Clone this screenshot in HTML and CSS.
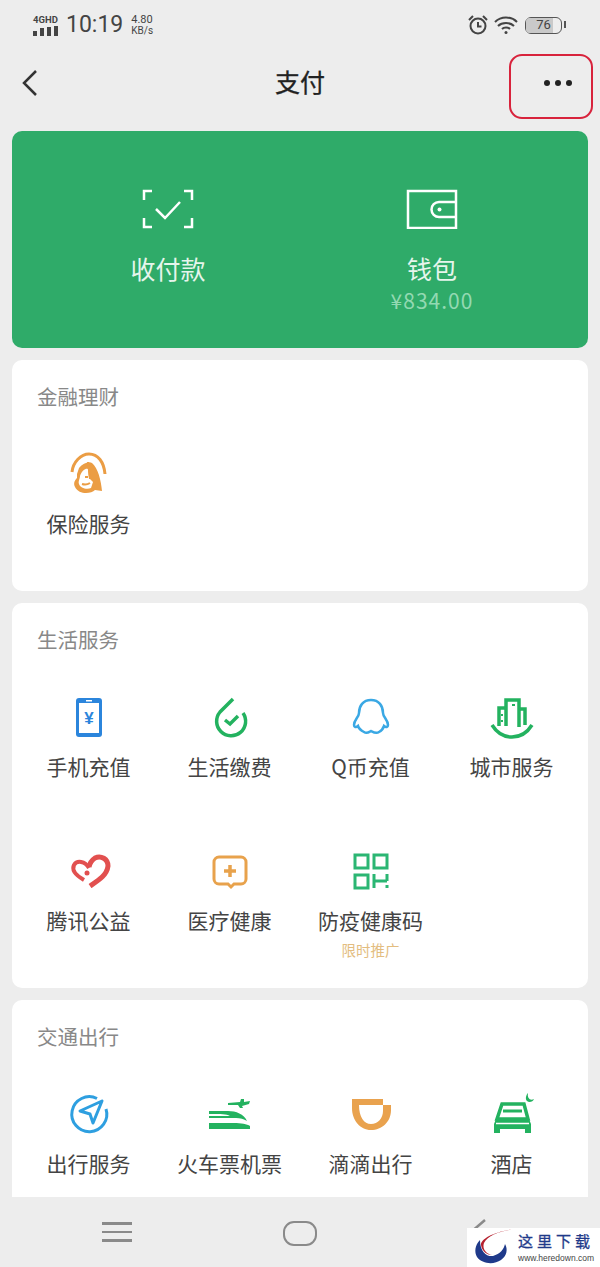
FILE: index.html
```html
<!DOCTYPE html>
<html lang="zh-CN">
<head>
  <meta charset="UTF-8" />
  <title>支付</title>
  <link rel="stylesheet" href="styles.css">
</head>
<body>
  <div class="screen">
    <div class="status-bar">
      <div class="status-left">
        <div class="net">
          <span class="net-label">4GHD</span>
          <svg width="25" height="10" viewBox="0 0 25 10"><g fill="#444"><rect x="0" y="5" width="4" height="5"/><rect x="7" y="2" width="4" height="8"/><rect x="14" y="1" width="4" height="9"/><rect x="21" y="0" width="4" height="10"/></g></svg>
        </div>
        <span class="clock">10:19</span>
        <div class="speed"><span>4.80</span><span class="speed-unit">KB/s</span></div>
      </div>
      <div class="status-right">
        <svg width="22" height="22" viewBox="0 0 22 22" fill="none" stroke="#444" stroke-width="2"><circle cx="11" cy="12" r="7.500"/><path d="M11 8v4.500h3.500M2 6l4-4M20 6l-4-4"/></svg>
        <svg class="wifi" width="26" height="20" viewBox="0 0 26 20" fill="none" stroke="#444" stroke-width="2"><path d="M2 7c6-6 16-6 22 0M5 11c4-4 12-4 16 0M9 14c2-2 6-2 8 0"/><circle cx="13" cy="17.500" r="1.500" fill="#444" stroke="none"/></svg>
        <div class="battery"><span class="battery-fill"></span><span class="battery-num">76</span></div>
      </div>
    </div>

    <div class="nav-bar">
      <svg class="back" width="18" height="28" viewBox="0 0 18 28" fill="none" stroke="#333" stroke-width="2.500"><path d="M15 2L3 14l12 12"/></svg>
      <div class="nav-title">支付</div>
      <div class="more"><i></i><i></i><i></i></div>
      <div class="highlight"></div>
    </div>

    <div class="content">
      <div class="hero">
        <div class="hero-item">
          <svg width="52" height="40" viewBox="0 0 52 40" fill="none" stroke="#fff" stroke-width="2.500"><path d="M10 2H2v9M42 2h8v9M2 29v9h8M50 29v9h-8M14 20l9 9 15-16"/></svg>
          <div class="hero-label">收付款</div>
        </div>
        <div class="hero-item">
          <svg width="52" height="40" viewBox="0 0 52 40" fill="none" stroke="#fff" stroke-width="2.500"><path d="M2 2h48v37H2zM50 13H33a7.500 7.500 0 0 0 0 15h17"/><circle cx="33.500" cy="20.500" r="2" fill="#fff" stroke="none"/></svg>
          <div class="hero-label">钱包</div>
          <div class="hero-amount">¥834.00</div>
        </div>
      </div>

      <div class="card">
        <div class="card-title">金融理财</div>
        <div class="grid">
          <div class="item">
            <svg class="icon" viewBox="0 0 48 48"><path d="M7 22C8 12 16 4 24 4c9 0 15 8 16 20" fill="none" stroke="#eb9d44" stroke-width="3"/><path d="M12 24l2-6c4-5 10-7 13-5 6 5 9 17 10 28l-7-1c-4 4-16 5-20-3-2-4 0-7 2-9z" fill="#eb9d44"/><path d="M15 26c2-6 6-8 8-7l1 9 4 4-2 6c-4 2-11 0-12-4-1-3 1-5 1-8z" fill="#fff"/><path d="M23 12l2 17M20 27h3M17 34c3 1 5 1 8-1" fill="none" stroke="#eb9d44" stroke-width="2"/></svg>
            <div class="item-label">保险服务</div>
          </div>
        </div>
      </div>

      <div class="card">
        <div class="card-title">生活服务</div>
        <div class="grid">
          <div class="item">
            <svg class="icon" viewBox="0 0 48 48"><rect x="11" y="5" width="26" height="39" rx="3" fill="#2b85dc"/><rect x="14" y="10" width="20" height="30" fill="#fff"/><rect x="21" y="7" width="6" height="1.500" fill="#fff"/><text x="24" y="31" text-anchor="middle" class="yen">¥</text></svg>
            <div class="item-label">手机充值</div>
          </div>
          <div class="item">
            <svg class="icon" viewBox="0 0 48 48" fill="none" stroke="#23b25f" stroke-width="3.500"><path d="M27 6L14 19a14.500 14.500 0 1 0 23 1M19 27l5 4 8-8"/></svg>
            <div class="item-label">生活缴费</div>
          </div>
          <div class="item">
            <svg class="icon" viewBox="0 0 48 48" fill="none" stroke="#3aa8e4" stroke-width="2.500"><path d="M24 7c-8 0-12 6-12 13 0 4-5 7-5 12 0 2 2 3 4 1 1 3 4 5 6 6 3 2 5 0 7-1 2 1 5 3 8 1 2-1 4-3 5-6 2 2 4 1 4-1 0-5-5-8-5-12 0-7-4-13-12-13z"/></svg>
            <div class="item-label">Q币充值</div>
          </div>
          <div class="item">
            <svg class="icon" viewBox="0 0 48 48" fill="none" stroke="#23b25f" stroke-width="3.500"><path d="M4 32c10 16 30 16 40 0"/><path d="M18 33V7h13v27M18 15h-7v18M31 16h6v16"/><path d="M14 21v2M14 27v2M24 12h3" stroke-width="2"/></svg>
            <div class="item-label">城市服务</div>
          </div>
          <div class="item">
            <svg class="icon" viewBox="0 0 48 48" fill="none" stroke="#e2504f" stroke-width="5"><path d="M25 39c9-6 17-11 18-20 0-7-7-11-13-8-3 2-5 4-6 9"/><path d="M24 21c-4-7-12-8-15-3-3 6 3 11 10 15" stroke-width="4"/><circle cx="22" cy="26" r="2.500" fill="#e2504f" stroke="none"/></svg>
            <div class="item-label">腾讯公益</div>
          </div>
          <div class="item">
            <svg class="icon" viewBox="0 0 48 48" fill="none" stroke="#e8a24c" stroke-width="3"><path d="M13 10h22a5 5 0 0 1 5 5v17a5 5 0 0 1-5 5h-7l-3 3-3-3H13a5 5 0 0 1-5-5V15a5 5 0 0 1 5-5z"/><path d="M24 18v12M18 24h12" stroke-width="3.500"/></svg>
            <div class="item-label">医疗健康</div>
          </div>
          <div class="item">
            <svg class="icon" viewBox="0 0 48 48" fill="none" stroke="#2bb673" stroke-width="3"><path d="M8 8h13v13H8zM27 8h13v13H27zM8 28h13v13H8zM27 27v14M40 27v7M27 34h13M40 38v3"/></svg>
            <div class="item-label">防疫健康码</div>
            <div class="item-sub">限时推广</div>
          </div>
        </div>
      </div>

      <div class="card">
        <div class="card-title">交通出行</div>
        <div class="grid">
          <div class="item">
            <svg class="icon" viewBox="0 0 48 48" fill="none" stroke="#2e9fe0" stroke-width="3"><path d="M32 8.500A17.500 17.500 0 1 0 41 19"/><path d="M37 11L15 21l10 3 3 9z" stroke-linejoin="round"/></svg>
            <div class="item-label">出行服务</div>
          </div>
          <div class="item">
            <svg class="icon" viewBox="0 0 48 48" fill="#23b25f"><path d="M3 33h25c7 0 13 1 16 3v3H3z"/><path d="M3 21h19c8 0 16 3 19 10-3-2-7-3-11-3H3v-2h21c-4-2-8-2-21-2z"/><path d="M22 13l12-1 1-3 3 0 0 3 6-1-1 3-7 2 1 2-3 0-2-3-10 0z"/></svg>
            <div class="item-label">火车票机票</div>
          </div>
          <div class="item">
            <svg class="icon" viewBox="0 0 48 48"><path fill-rule="evenodd" d="M5 9h31v6h8v5c0 12-9 20-20 20S5 30 5 18zM12 15h24v6c0 7-5 13-12 13s-12-7-12-19z" fill="#e9a24e"/></svg>
            <div class="item-label">滴滴出行</div>
          </div>
          <div class="item">
            <svg class="icon" viewBox="0 0 48 48"><path d="M14 14h22l4 15H9z" fill="none" stroke="#23b25f" stroke-width="3.500"/><path d="M15 21h19" stroke="#23b25f" stroke-width="3"/><path d="M8 29h33l2 5v9h-6v-4H12v4H6v-9z" fill="#23b25f"/><path d="M8 33.500h33" stroke="#fff" stroke-width="1.500"/><path d="M40 3c-1 5 2 8 6 6-1 3-5 4-7 2s-1-6 1-8z" fill="#23b25f"/></svg>
            <div class="item-label">酒店</div>
          </div>
        </div>
      </div>
    </div>

    <div class="bottom-bar">
      <div class="menu-btn"><i></i><i></i><i></i></div>
      <div class="home-btn"></div>
      <svg class="back-btn" width="30" height="30" viewBox="0 0 30 30" fill="none" stroke="#8a8a8a" stroke-width="2.500"><path d="M19 3L5 15l14 12"/></svg>
    </div>

    <div class="watermark">
      <svg width="44" height="39" viewBox="0 0 44 39"><path d="M44 1C30 3 17 7 13 15c-2 6 2 11 8 12-4 0-10-3-11-10C9 11 24 3 44 1z" fill="#b5202e"/><path d="M9 12C4 17 3 24 6 29c5 7 17 8 24 3 6-4 7-11 4-16-1 5-5 10-12 12-6 1-13-4-13-16z" fill="#1f3a8a"/></svg>
      <div class="wm-text">
        <div class="wm-name">这里下载</div>
        <div class="wm-url">www.heredown.com</div>
      </div>
    </div>
  </div>
</body>
</html>
```

FILE: styles.css
```css
* {
  box-sizing: border-box;
}

body {
  margin: 0;
  background-color: #ededed;
  font-family: "Noto Sans CJK SC", "Noto Sans", sans-serif;
  color: #444;
}

.screen {
  position: relative;
  display: flex;
  flex-direction: column;
  width: 600px;
  height: 1267px;
  overflow: hidden;
}

/* status bar */
.status-bar {
  display: flex;
  justify-content: space-between;
  align-items: center;
  height: 46px;
  padding: 4px 38px 0 33px;
  color: #444;
  font-family: Roboto, sans-serif;
}

.status-left,
.status-right {
  display: flex;
  align-items: center;
}

.status-left {
  gap: 8px;
}

.status-right {
  gap: 4px;
}

.net {
  display: flex;
  flex-direction: column;
  gap: 1px;
}

.net-label {
  font-size: 9.5px;
  line-height: 10px;
  font-weight: 700;
}

.clock {
  font-size: 23px;
  line-height: 28px;
}

.speed {
  display: flex;
  flex-direction: column;
  font-size: 11px;
  line-height: 11px;
}

.speed-unit {
  font-size: 10px;
}

.wifi {
  margin-right: 2px;
}

.battery {
  position: relative;
  width: 37px;
  height: 17px;
  border: 1.5px solid #555;
  border-radius: 6px;
  text-align: center;
  font-size: 13px;
  line-height: 14px;
}

.battery::after {
  content: "";
  position: absolute;
  right: -4.5px;
  top: 3.5px;
  width: 2px;
  height: 7px;
  background-color: #555;
}

.battery-fill {
  position: absolute;
  left: 0;
  top: 0;
  bottom: 0;
  width: 76%;
  background-color: #c9c9c9;
  border-radius: 4px 0 0 4px;
}

.battery-num {
  position: relative;
}

/* nav */
.nav-bar {
  position: relative;
  display: grid;
  grid-template-columns: 1fr auto 1fr;
  align-items: center;
  height: 85px;
  padding: 0 28px 15px;
}

.back {
  margin-top: 4px;
  margin-left: -7px;
}

.nav-title {
  font-size: 25px;
  line-height: 34px;
  color: #222;
  -webkit-text-stroke: 0.3px #222;
}

.more {
  display: flex;
  justify-content: flex-end;
  gap: 5px;
  margin-top: 4px;
}

.more i {
  width: 6px;
  height: 6px;
  border-radius: 50%;
  background-color: #222;
}

.highlight {
  position: absolute;
  left: 509px;
  top: 8px;
  width: 84px;
  height: 65px;
  border: 2.5px solid #d8233c;
  border-radius: 13px;
}

/* main cards */
.content {
  flex: 1;
  display: flex;
  flex-direction: column;
  gap: 12px;
  padding: 0 12px;
  overflow: hidden;
}

.hero {
  flex-shrink: 0;
  display: grid;
  grid-template-columns: 1fr 1fr;
  height: 217px;
  padding: 58px 24px 0;
  background-color: #2fab69;
  border-radius: 10px;
}

.hero-item {
  display: flex;
  flex-direction: column;
  align-items: center;
}

.hero-label {
  margin-top: 23px;
  font-size: 25px;
  line-height: 32px;
  color: #e6f5ec;
}

.hero-amount {
  font-size: 21px;
  line-height: 32px;
  letter-spacing: 1px;
  color: #93d9b2;
}

.card {
  flex-shrink: 0;
  padding: 23px 6px 28px;
  background-color: #fff;
  border-radius: 10px;
}

.card-title {
  margin-bottom: 1px;
  padding-left: 19px;
  font-size: 20.5px;
  line-height: 26px;
  color: #888;
}

.grid {
  display: grid;
  grid-template-columns: repeat(4, 1fr);
  grid-auto-rows: 153px;
  row-gap: 1px;
}

.item {
  display: flex;
  flex-direction: column;
  align-items: center;
  padding-top: 40px;
}

.icon {
  width: 48px;
  height: 48px;
}

.yen {
  font-family: "Liberation Sans", sans-serif;
  font-size: 17px;
  font-weight: 700;
  fill: #2b85dc;
}

.item-label {
  margin-top: 11px;
  font-size: 21px;
  line-height: 28px;
  color: #444;
  white-space: nowrap;
}

.item-sub {
  margin-top: 8px;
  font-size: 14.5px;
  line-height: 16px;
  color: #e3bd7f;
}

/* bottom nav */
.bottom-bar {
  flex-shrink: 0;
  position: relative;
  display: flex;
  align-items: center;
  height: 70px;
  padding-bottom: 2px;
}

.menu-btn {
  position: absolute;
  left: 102px;
  top: 25px;
  display: flex;
  flex-direction: column;
  gap: 6px;
}

.menu-btn i {
  width: 30px;
  height: 2.5px;
  background-color: #8a8a8a;
}

.home-btn {
  position: absolute;
  left: 283px;
  top: 24px;
  width: 34px;
  height: 25px;
  border: 2.5px solid #8a8a8a;
  border-radius: 11px;
}

.back-btn {
  position: absolute;
  left: 466px;
  top: 20px;
}

/* site stamp over the corner */
.watermark {
  position: absolute;
  right: 0;
  bottom: 0;
  display: flex;
  gap: 3px;
  width: 133px;
  height: 39px;
  padding-left: 4px;
  background-color: #fff;
}

.wm-text {
  display: flex;
  flex-direction: column;
  align-items: center;
  padding-top: 3px;
}

.wm-name {
  font-size: 15px;
  line-height: 20px;
  letter-spacing: 4px;
  color: #1f3a8a;
  -webkit-text-stroke: 0.3px #1f3a8a;
}

.wm-url {
  font-family: "Liberation Sans", sans-serif;
  font-size: 8.5px;
  line-height: 14px;
  color: #444;
  white-space: nowrap;
}
```
